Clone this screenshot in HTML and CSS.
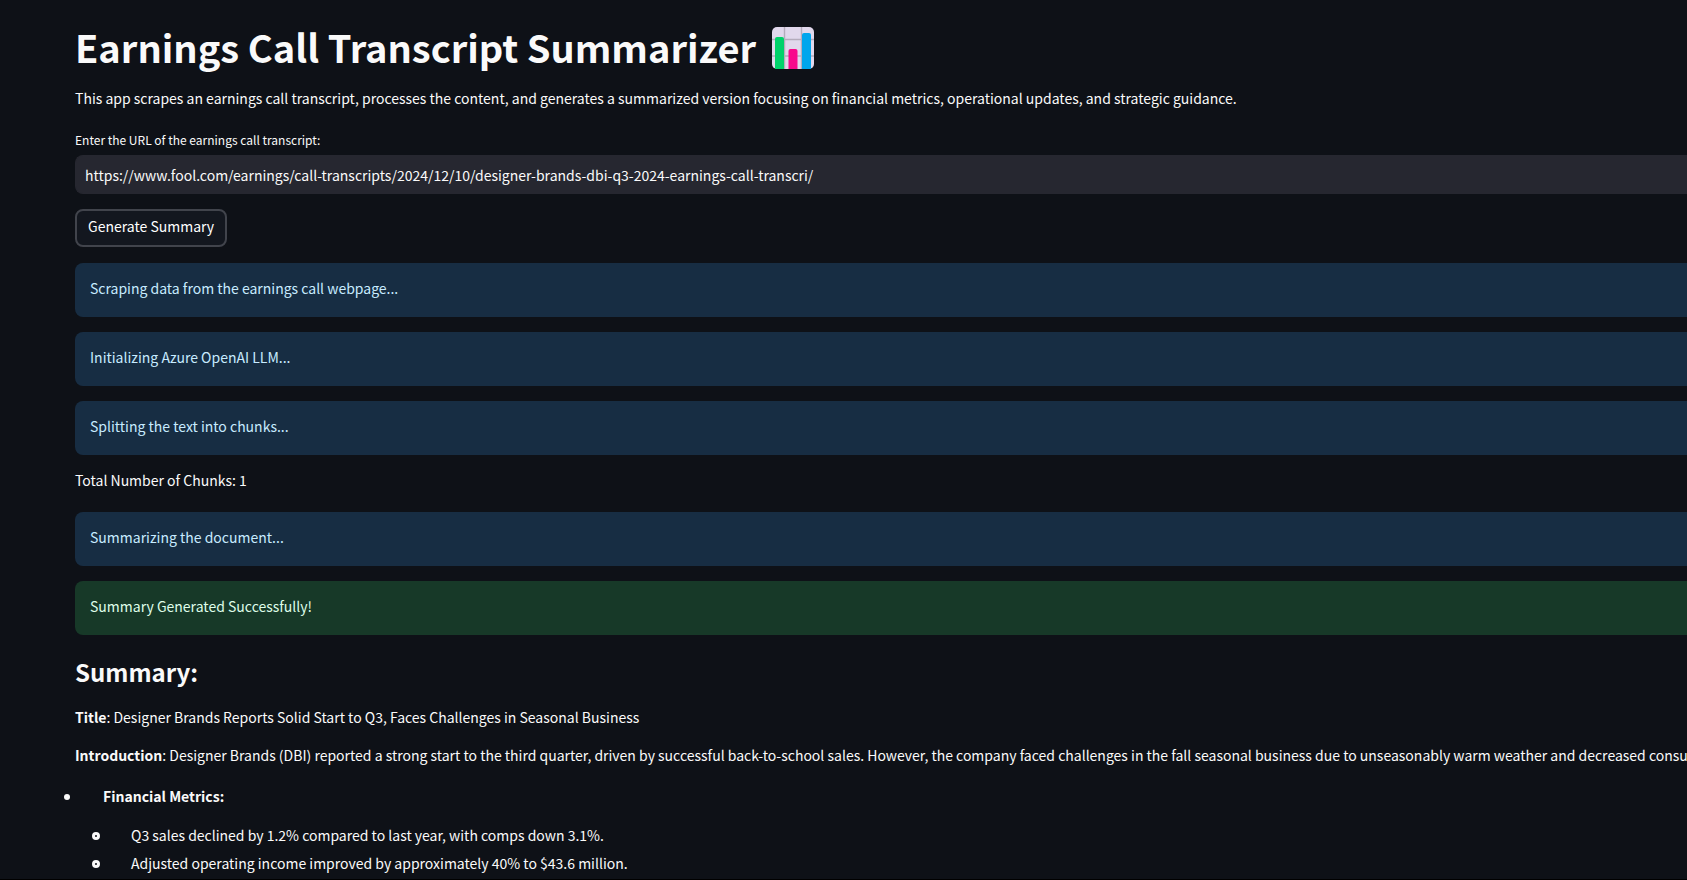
FILE: index.html
```html
<!DOCTYPE html>
<html lang="en">
<head>
    <meta charset="UTF-8">
    <meta name="viewport" content="width=device-width, initial-scale=1.0">
    <title>Earnings Call Transcript Summarizer</title>
    <link rel="stylesheet" href="styles.css">
</head>
<body>

<main>
    <header>
        <h1>Earnings Call Transcript Summarizer</h1>
        <svg class="chart-icon" viewBox="0 0 42 42" aria-hidden="true">
            <rect width="42" height="42" rx="5" fill="#e1d8ec"/>
            <path d="M12.5 0v42M29.5 0v42M0 12.500h42M0 29h42" stroke="#b4acbc" stroke-width="1.4"/>
            <path d="M3 42V12a2 2 0 0 1 2-2h5a2 2 0 0 1 2 2v30z" fill="#00d26a"/>
            <path d="M16.500 42V24a2 2 0 0 1 2-2h5a2 2 0 0 1 2 2v18z" fill="#f8098c"/>
            <path d="M30 42V8a2 2 0 0 1 2-2h5a2 2 0 0 1 2 2v34z" fill="#00a6ed"/>
        </svg>
    </header>

    <p class="intro">This app scrapes an earnings call transcript, processes the content, and generates a summarized version focusing on financial metrics, operational updates, and strategic guidance.</p>

    <form onsubmit="return false">
        <label for="url">Enter the URL of the earnings call transcript:</label>
        <input type="text" id="url" name="url" value="https://www.fool.com/earnings/call-transcripts/2024/12/10/designer-brands-dbi-q3-2024-earnings-call-transcri/">
        <button type="submit">Generate Summary</button>
    </form>

    <section class="status">
        <p class="alert info">Scraping data from the earnings call webpage...</p>
        <p class="alert info">Initializing Azure OpenAI LLM...</p>
        <p class="alert info">Splitting the text into chunks...</p>
        <p class="chunks">Total Number of Chunks: 1</p>
        <p class="alert info">Summarizing the document...</p>
        <p class="alert success">Summary Generated Successfully!</p>
    </section>

    <section class="summary">
        <h2>Summary:</h2>
        <p><strong>Title</strong>: Designer Brands Reports Solid Start to Q3, Faces Challenges in Seasonal Business</p>
        <p><strong>Introduction</strong>: Designer Brands (DBI) reported a strong start to the third quarter, driven by successful back-to-school sales. However, the company faced challenges in the fall seasonal business due to unseasonably warm weather and decreased consumer</p>
        <ul>
            <li>
                <strong>Financial Metrics:</strong>
                <ul>
                    <li>Q3 sales declined by 1.2% compared to last year, with comps down 3.1%.</li>
                    <li>Adjusted operating income improved by approximately 40% to $43.6 million.</li>
                </ul>
            </li>
        </ul>
    </section>
</main>

</body>
</html>
```

FILE: styles.css
```css
*, *::before {
    box-sizing: border-box;
}
body {
    margin: 0;
    min-height: 100vh;
    background-color: #0e1117;
    border-bottom: 1px solid #000;
    color: #fafafa;
    font-family: "Noto Sans CJK SC", "Open Sans", sans-serif;
    font-size: 14px;
    line-height: 24px;
    overflow: hidden;
}
main {
    padding: 22px 0 0 75px;
}
h1, h2, p, ul {
    margin: 0;
}

/* Title */
header {
    display: flex;
    align-items: center;
    gap: 16px;
}
h1 {
    font-size: 38px;
    line-height: 50px;
    padding-bottom: 2px;
}
.chart-icon {
    width: 42px;
    height: 42px;
}
.intro {
    margin-top: 12px;
}

/* URL form */
form {
    display: flex;
    flex-direction: column;
    align-items: flex-start;
    margin-top: 20px;
}
label {
    font-size: 12px;
    line-height: 20px;
    margin-bottom: 5px;
}
input {
    width: 100%;
    height: 39px;
    padding: 0 9px;
    background-color: #262730;
    border: 1px solid #262730;
    border-right: none;
    border-radius: 8px 0 0 8px;
    color: #fafafa;
    font: inherit;
}
button {
    height: 38px;
    margin-top: 15px;
    padding: 0 11px 4px;
    background-color: #13171f;
    border: 2px solid #41444c;
    border-radius: 8px;
    color: #fff;
    font: inherit;
}

/* Status messages */
.status {
    display: flex;
    flex-direction: column;
    gap: 15px;
    margin-top: 16px;
}
.alert {
    padding: 13px 15px 17px;
    border-radius: 8px 0 0 8px;
}
.info {
    background-color: #172d43;
    color: #c7ebff;
}
.success {
    background-color: #173928;
    color: #dffde9;
}
.chunks {
    margin-top: -2px;
    padding-bottom: 5px;
}

/* Summary */
.summary {
    margin-top: 19px;
    white-space: nowrap;
}
h2 {
    font-size: 24px;
    line-height: 36px;
    margin-bottom: 15px;
}
.summary p {
    margin-bottom: 14px;
}
.summary ul {
    margin-top: 17px;
    padding-left: 28px;
    list-style: none;
}
.summary ul ul {
    margin-top: 15px;
}
.summary li {
    position: relative;
}
.summary ul ul li {
    margin-bottom: 4px;
}
/* bullets sit well left of the text */
.summary li::before {
    content: "";
    position: absolute;
    top: 10px;
    left: -39px;
    width: 6px;
    height: 6px;
    border-radius: 50%;
    background-color: #fafafa;
}
.summary li li::before {
    top: 9px;
    width: 8px;
    height: 8px;
    border: 3px solid #fafafa;
    background-color: transparent;
}
```
